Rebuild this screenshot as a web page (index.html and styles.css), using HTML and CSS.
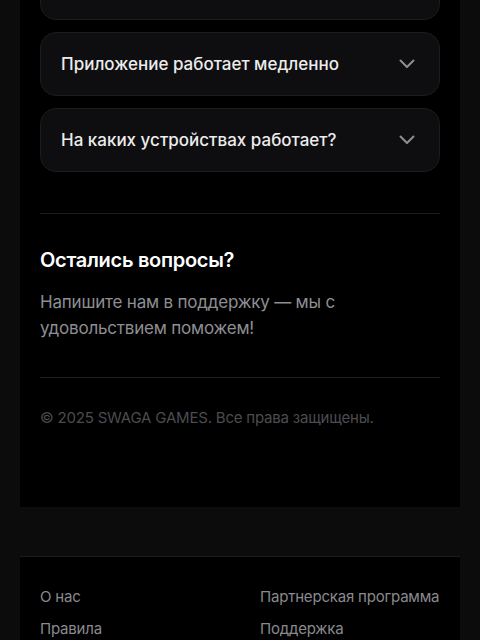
FILE: index.html
```html
<!DOCTYPE html>
<html lang="ru">
<head>
    <meta charset="UTF-8" />
    <meta name="viewport" content="width=device-width, initial-scale=1.0" />
    <title>SWAGA GAMES — FAQ</title>
    <link rel="stylesheet" href="styles.css">
</head>
<body>
    <main class="panel">
        <section class="faq">
            <div class="faq-item">
                <span>Как пополнить баланс?</span>
                <svg class="chevron" width="16" height="10" viewBox="0 0 16 10"><path d="M1.5 1.5 8 8l6.5-6.5" /></svg>
            </div>
            <div class="faq-item">
                <span>Приложение работает медленно</span>
                <svg class="chevron" width="16" height="10" viewBox="0 0 16 10"><path d="M1.5 1.5 8 8l6.5-6.5" /></svg>
            </div>
            <div class="faq-item">
                <span>На каких устройствах работает?</span>
                <svg class="chevron" width="16" height="10" viewBox="0 0 16 10"><path d="M1.5 1.5 8 8l6.5-6.5" /></svg>
            </div>
        </section>

        <section class="questions">
            <h2>Остались вопросы?</h2>
            <p>Напишите нам в поддержку — мы с удовольствием поможем!</p>
        </section>

        <p class="copyright">&copy; 2025 SWAGA GAMES. Все права защищены.</p>
    </main>

    <footer class="site-footer">
        <a href="#">О нас</a>
        <a href="#">Партнерская программа</a>
        <a href="#">Правила</a>
        <a href="#">Поддержка</a>
    </footer>
</body>
</html>
```

FILE: styles.css
```css
body {
    font-family: Inter, 'Noto Sans', sans-serif;
    margin: 0;
    padding: 0 20px;
    background-color: #0c0c0c;
    color: #fff;
}

.panel {
    background-color: #000;
    padding: 0 20px 79px;
    margin-top: -44px;
}

.faq {
    display: flex;
    flex-direction: column;
    gap: 12px;
    padding-bottom: 41px;
    border-bottom: 1px solid #1c1c1e;
}

.faq-item {
    height: 62px;
    display: flex;
    align-items: center;
    justify-content: space-between;
    padding: 0 24px 0 20px;
    background-color: #0e0e10;
    border: 1px solid #1c1c1f;
    border-radius: 16px;
    font-size: 17px;
    font-weight: 500;
    color: #ececec;
}

.chevron {
    fill: none;
    stroke: #8e8e93;
    stroke-width: 2;
    stroke-linecap: round;
    stroke-linejoin: round;
}

.questions {
    padding: 34px 0 36px;
    border-bottom: 1px solid #1c1c1e;
}

.questions h2 {
    margin: 0 0 17px;
    font-size: 20px;
    line-height: 24px;
    font-weight: 600;
    letter-spacing: -0.3px;
    color: #fff;
}

.questions p {
    margin: 0;
    font-size: 17px;
    line-height: 26px;
    letter-spacing: -0.2px;
    color: #8e8e93;
}

.copyright {
    margin: 30px 0 0;
    font-size: 15px;
    line-height: 20px;
    letter-spacing: -0.2px;
    color: #4c4c50;
}

.site-footer {
    margin-top: 49px;
    border-top: 1px solid #1c1c1e;
    background-color: #000;
    padding: 30px 20px 20px;
    display: grid;
    grid-template-columns: 1fr 1fr;
    column-gap: 40px;
    row-gap: 12px;
}

.site-footer a {
    font-size: 15px;
    line-height: 20px;
    letter-spacing: -0.2px;
    color: #8a8a8e;
    text-decoration: none;
    white-space: nowrap;
}
```
